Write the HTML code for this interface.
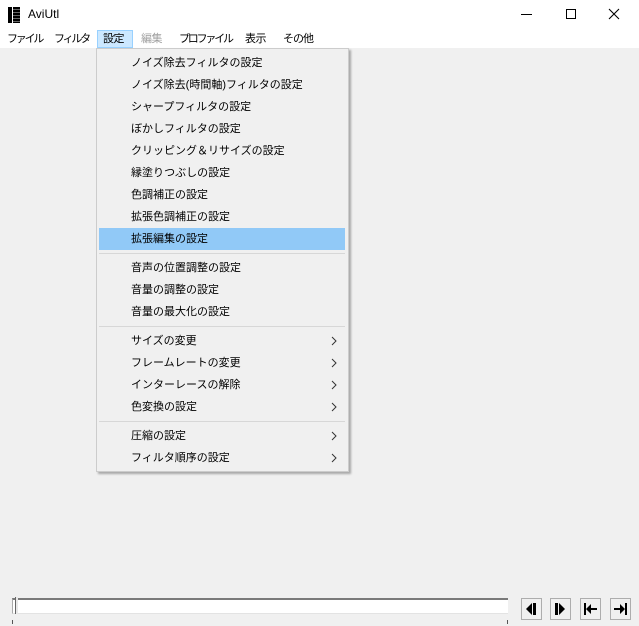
<!DOCTYPE html>
<html><head><meta charset="utf-8"><style>
*{margin:0;padding:0;box-sizing:border-box}
body{width:639px;height:626px;background:#f0f0f0;position:relative;overflow:hidden;font-family:"Liberation Sans","Noto Sans CJK JP",sans-serif;font-size:11px;color:#000}
.title{position:absolute;left:0;top:0;width:639px;height:30px;background:#fff}
.menubar{position:absolute;left:0;top:30px;width:639px;height:18px;background:#fff}
.mb{position:absolute;top:1px;height:17px;line-height:17px;font-size:11px;letter-spacing:-2.2px;white-space:nowrap}
.menu{position:absolute;left:96px;top:48px;width:253px;height:424px;background:#f0f0f0;border:1px solid #cccccc;box-shadow:2px 2px 2px rgba(0,0,0,.3)}
.it{position:absolute;left:34px;height:22px;line-height:22px;white-space:nowrap;font-size:11px}
.ar{position:absolute;left:233px;width:8px;height:22px}
.sep{position:absolute;left:2px;width:246px;height:1px;background:#d7d7d7}
.btn{position:absolute;top:598px;width:21px;height:22px;background:#f0f0f0;border:1px solid #adadad}
</style></head><body>
<div class="title">
<div style="position:absolute;left:8px;top:7px;width:4px;height:16px;background:#000"></div>
<div style="position:absolute;left:13px;top:7px;width:7px;height:16px;background:repeating-linear-gradient(#000 0 2px,#666 2px 3px)"></div>
<div style="position:absolute;left:28px;top:7px;font-size:12px">AviUtl</div>
<div style="position:absolute;left:521px;top:14px;width:11px;height:1px;background:#000"></div>
<div style="position:absolute;left:566px;top:9px;width:10px;height:10px;border:1px solid #000"></div>
<svg style="position:absolute;left:608px;top:8px" width="12" height="12"><path d="M1 1L11 11M11 1L1 11" stroke="#000" stroke-width="1.1"/></svg>
</div>
<div class="menubar">
<div class="mb" style="left:7px">ファイル</div>
<div class="mb" style="left:54px">フィルタ</div>
<div style="position:absolute;left:97px;top:0;width:36px;height:18px;background:#cce8ff;border:1px solid #99d1ff"></div>
<div class="mb" style="left:103px;letter-spacing:-0.5px">設定</div>
<div class="mb" style="left:141px;color:#a0a0a0;letter-spacing:-0.5px">編集</div>
<div class="mb" style="left:179px">プロファイル</div>
<div class="mb" style="left:245px;letter-spacing:-0.5px">表示</div>
<div class="mb" style="left:283px;letter-spacing:-1px">その他</div>
</div>
<div class="menu">
<div style="position:absolute;left:2px;top:179px;width:246px;height:22px;background:#91c9f7"></div>
<div class="it" style="top:3px">ノイズ除去フィルタの設定</div>
<div class="it" style="top:25px">ノイズ除去(時間軸)フィルタの設定</div>
<div class="it" style="top:47px">シャープフィルタの設定</div>
<div class="it" style="top:69px">ぼかしフィルタの設定</div>
<div class="it" style="top:91px">クリッピング＆リサイズの設定</div>
<div class="it" style="top:113px">縁塗りつぶしの設定</div>
<div class="it" style="top:135px">色調補正の設定</div>
<div class="it" style="top:157px">拡張色調補正の設定</div>
<div class="it" style="top:179px">拡張編集の設定</div>
<div class="sep" style="top:204px"></div>
<div class="it" style="top:208px">音声の位置調整の設定</div>
<div class="it" style="top:230px">音量の調整の設定</div>
<div class="it" style="top:252px">音量の最大化の設定</div>
<div class="sep" style="top:277px"></div>
<div class="it" style="top:281px">サイズの変更</div><svg class="ar" style="top:281px" width="8" height="22"><path d="M2 7L6 11L2 15" fill="none" stroke="#333"/></svg>
<div class="it" style="top:303px">フレームレートの変更</div><svg class="ar" style="top:303px" width="8" height="22"><path d="M2 7L6 11L2 15" fill="none" stroke="#333"/></svg>
<div class="it" style="top:325px">インターレースの解除</div><svg class="ar" style="top:325px" width="8" height="22"><path d="M2 7L6 11L2 15" fill="none" stroke="#333"/></svg>
<div class="it" style="top:347px">色変換の設定</div><svg class="ar" style="top:347px" width="8" height="22"><path d="M2 7L6 11L2 15" fill="none" stroke="#333"/></svg>
<div class="sep" style="top:372px"></div>
<div class="it" style="top:376px">圧縮の設定</div><svg class="ar" style="top:376px" width="8" height="22"><path d="M2 7L6 11L2 15" fill="none" stroke="#333"/></svg>
<div class="it" style="top:398px">フィルタ順序の設定</div><svg class="ar" style="top:398px" width="8" height="22"><path d="M2 7L6 11L2 15" fill="none" stroke="#333"/></svg>
</div>
<div style="position:absolute;left:12px;top:598px;width:496px;height:16px;background:#fff;border-top:2px solid #7a7a7a;border-left:1px solid #aaa;border-bottom:1px solid #e3e3e3"></div>
<div style="position:absolute;left:15px;top:597px;width:3px;height:17px;background:#e8e8e8;border-left:1px solid #666"></div>
<div style="position:absolute;left:12px;top:620px;width:1px;height:4px;background:#555"></div>
<div style="position:absolute;left:507px;top:620px;width:1px;height:4px;background:#555"></div>
<div class="btn" style="left:521px"><svg width="19" height="20"><path d="M4 10L10 4V16Z" fill="#000"/><rect x="11" y="4" width="3" height="12" fill="#000"/></svg></div>
<div class="btn" style="left:550px"><svg width="19" height="20"><rect x="4" y="4" width="3" height="12" fill="#000"/><path d="M8 4L14 10L8 16Z" fill="#000"/></svg></div>
<div class="btn" style="left:580px"><svg width="19" height="20"><rect x="3" y="4" width="2" height="12" fill="#000"/><path d="M5 10L10 5V9H16V11H10V15Z" fill="#000"/></svg></div>
<div class="btn" style="left:610px"><svg width="19" height="20"><rect x="14" y="4" width="2" height="12" fill="#000"/><path d="M14 10L9 5V9H3V11H9V15Z" fill="#000"/></svg></div>
</body></html>
